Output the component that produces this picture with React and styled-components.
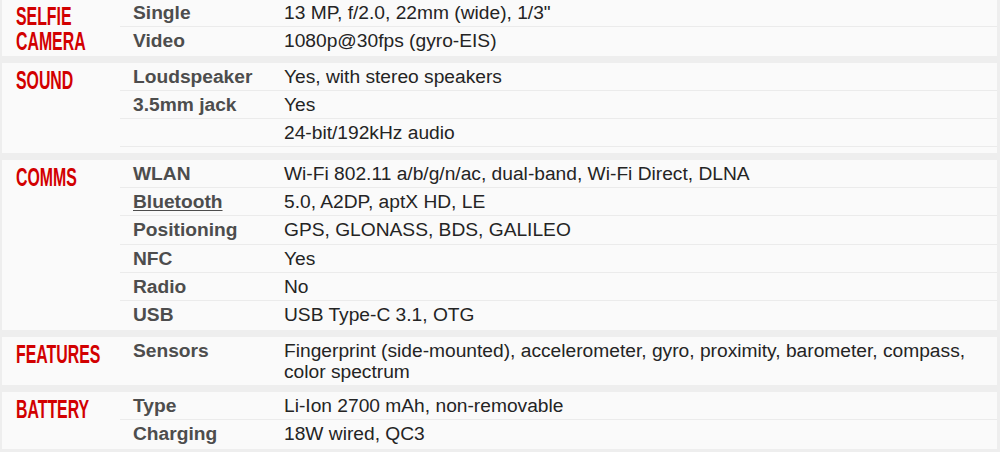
import React from 'react';
import styled, { createGlobalStyle } from 'styled-components';

const GlobalStyle = createGlobalStyle`
  html, body {
    margin: 0;
    padding: 0;
    background: #eeeeee;
  }
  body {
    font-family: "Liberation Sans", Arial, sans-serif;
    overflow: hidden;
  }
`;

const Page = styled.div`
  width: 1000px;
  height: 452px;
  margin-top: -1px;
  padding: 0 3px 0 2px;
  box-sizing: border-box;
  display: flex;
  flex-direction: column;
  gap: 7px;
`;

const Section = styled.section`
  display: grid;
  grid-template-columns: 118px 1fr;
  align-items: start;
  background: #fafafa;
  padding-bottom: ${(props) => props.$extra || 0}px;
`;

const Heading = styled.h2`
  margin: 0;
  padding: 5px 0 0 14px;
  font-family: "Liberation Sans", Arial, sans-serif;
  font-weight: 700;
  font-size: 26px;
  line-height: 25px;
  color: #d20000;
  text-transform: uppercase;
`;

const HeadingLine = styled.span`
  display: block;
  width: max-content;
  transform: scaleX(0.61);
  transform-origin: left top;
`;

const Rows = styled.div`
  display: flex;
  flex-direction: column;
`;

const Row = styled.div`
  display: grid;
  grid-template-columns: 152px 1fr;
  padding: 3px 0 2.33px;
  border-bottom: 1px solid #ebebeb;
  font-size: 19.2px;
  line-height: 22px;
  ${(props) => props.$last && 'border-bottom: none; padding-bottom: 3.33px;'}
`;

const Label = styled.div`
  padding-left: 13px;
  font-weight: 700;
  color: #4d4d4d;
  text-decoration: ${(props) => (props.$link ? 'underline' : 'none')};
  text-underline-offset: 2px;
`;

const Value = styled.div`
  padding-left: 12px;
  color: #242424;
  line-height: 21px;
`;

const specs = [
  {
    title: ['Selfie', 'camera'],
    rows: [
      ['Single', '13 MP, f/2.0, 22mm (wide), 1/3"'],
      ['Video', '1080p@30fps (gyro-EIS)'],
    ],
  },
  {
    title: ['Sound'],
    extra: 6,
    rows: [
      ['Loudspeaker', 'Yes, with stereo speakers'],
      ['3.5mm jack', 'Yes'],
      ['', '24-bit/192kHz audio', true],
    ],
  },
  {
    title: ['Comms'],
    rows: [
      ['WLAN', 'Wi-Fi 802.11 a/b/g/n/ac, dual-band, Wi-Fi Direct, DLNA'],
      ['Bluetooth', '5.0, A2DP, aptX HD, LE'],
      ['Positioning', 'GPS, GLONASS, BDS, GALILEO'],
      ['NFC', 'Yes'],
      ['Radio', 'No'],
      ['USB', 'USB Type-C 3.1, OTG'],
    ],
  },
  {
    title: ['Features'],
    rows: [
      ['Sensors', 'Fingerprint (side-mounted), accelerometer, gyro, proximity, barometer, compass, color spectrum'],
    ],
  },
  {
    title: ['Battery'],
    rows: [
      ['Type', 'Li-Ion 2700 mAh, non-removable'],
      ['Charging', '18W wired, QC3'],
    ],
  },
];

export default function App() {
  return (
    <>
      <GlobalStyle />
      <Page>
        {specs.map((section) => (
          <Section key={section.title.join(' ')} $extra={section.extra}>
            <Heading>
              {section.title.map((line) => (
                <HeadingLine key={line}>{line}</HeadingLine>
              ))}
            </Heading>
            <Rows>
              {section.rows.map(([label, value, keepBorder], i) => (
                <Row
                  key={label + value}
                  $last={i === section.rows.length - 1 && !keepBorder}
                >
                  <Label $link={label === 'Bluetooth'}>{label}</Label>
                  <Value>{value}</Value>
                </Row>
              ))}
            </Rows>
          </Section>
        ))}
      </Page>
    </>
  );
}
